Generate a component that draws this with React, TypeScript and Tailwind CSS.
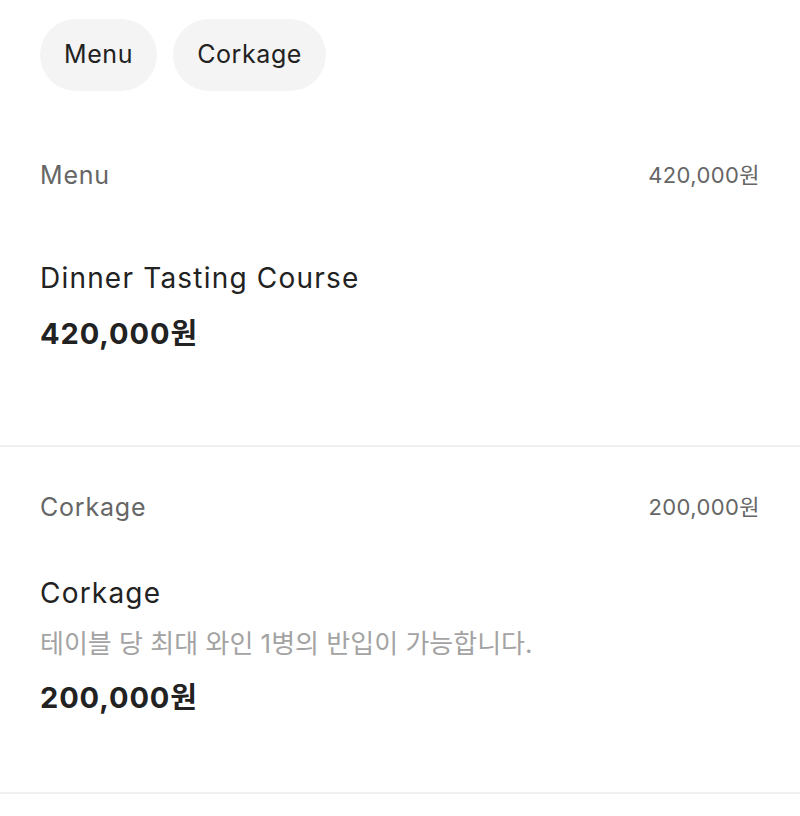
import React from "react";

const font = { fontFamily: 'Inter, "Noto Sans CJK KR", sans-serif' };

function Section({
  label,
  total,
  title,
  desc,
  price,
}: {
  label: string;
  total: string;
  title: string;
  desc?: string;
  price: string;
}) {
  return (
    <section className="border-b-2 border-[#f0f0f0] px-10 pt-[42px] pb-[74px]">
      <div className="flex items-center justify-between">
        <span className="text-[25px] leading-[36px] tracking-[0.8px] text-[#666666]">{label}</span>
        <span className="text-[22px] leading-[36px] tracking-[0.4px] text-[#666666]">{total}</span>
      </div>
      <div className="mt-12 flex min-h-[130px] flex-col justify-center">
        <div className="text-[28px] leading-[40px] tracking-[1.2px] text-[#222222]">{title}</div>
        {desc && (
          <div className="mt-[13px] text-[26px] leading-[36px] text-[#a3a3a3]">{desc}</div>
        )}
        <div className="mt-4 text-[29px] font-bold leading-[40px] tracking-[0.9px] text-[#222222]">
          {price}
        </div>
      </div>
    </section>
  );
}

export default function App() {
  return (
    <div className="min-h-[816px] w-full bg-white" style={font}>
      <div className="flex gap-4 px-10 pt-[19px] pb-[24px]">
        <button className="h-[72px] rounded-full bg-[#f4f4f4] px-6 text-[25px] tracking-[0.6px] text-[#222222]">
          Menu
        </button>
        <button className="h-[72px] rounded-full bg-[#f4f4f4] px-6 text-[25px] tracking-[0.6px] text-[#222222]">
          Corkage
        </button>
      </div>
      <Section label="Menu" total="420,000원" title="Dinner Tasting Course" price="420,000원" />
      <Section
        label="Corkage"
        total="200,000원"
        title="Corkage"
        desc="테이블 당 최대 와인 1병의 반입이 가능합니다."
        price="200,000원"
      />
    </div>
  );
}
